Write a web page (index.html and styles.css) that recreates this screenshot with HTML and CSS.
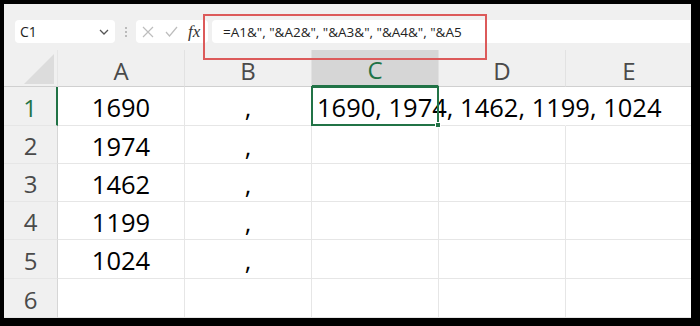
FILE: index.html
```html
<!DOCTYPE html>
<html>
<head>
<meta charset="utf-8">
<link rel="stylesheet" href="styles.css">
</head>
<body>
<div class="frame">
  <div class="app">
    <div class="fbar">
      <div class="namebox">
        <span>C1</span>
        <svg class="chev" width="10" height="6" viewBox="0 0 10 6"><polyline points="1,1 5,5 9,1" fill="none" stroke="#555" stroke-width="1.3"/></svg>
      </div>
      <div class="grip"><i></i><i></i><i></i></div>
      <div class="btns">
        <svg width="12" height="12" viewBox="0 0 12 12"><path d="M1 1 L11 11 M11 1 L1 11" stroke="#bdbdbd" stroke-width="1.2" fill="none"/></svg>
        <svg width="13" height="11" viewBox="0 0 13 11"><polyline points="1,6 4.5,10 12,1" fill="none" stroke="#bdbdbd" stroke-width="1.2"/></svg>
        <span class="fx">fx</span>
      </div>
      <div class="formula">=A1&amp;", "&amp;A2&amp;", "&amp;A3&amp;", "&amp;A4&amp;", "&amp;A5</div>
    </div>
    <div class="sheet">
      <div class="corner"><svg width="30" height="30" viewBox="0 0 30 30"><polygon points="30,0 30,30 0,30" fill="#dcdcdc"/></svg></div>
      <div class="ch">A</div>
      <div class="ch">B</div>
      <div class="ch ch-sel">C</div>
      <div class="ch">D</div>
      <div class="ch">E</div>

      <div class="rh rh-sel">1</div>
      <div class="c ctr">1690</div>
      <div class="c ctr">,</div>
      <div class="c sel"><span>1690, 1974, 1462, 1199, 1024</span></div>
      <div class="c no-rb"></div>
      <div class="c no-rb"></div>

      <div class="rh">2</div>
      <div class="c ctr">1974</div>
      <div class="c ctr">,</div>
      <div class="c"></div>
      <div class="c"></div>
      <div class="c"></div>

      <div class="rh">3</div>
      <div class="c ctr">1462</div>
      <div class="c ctr">,</div>
      <div class="c"></div>
      <div class="c"></div>
      <div class="c"></div>

      <div class="rh">4</div>
      <div class="c ctr">1199</div>
      <div class="c ctr">,</div>
      <div class="c"></div>
      <div class="c"></div>
      <div class="c"></div>

      <div class="rh">5</div>
      <div class="c ctr">1024</div>
      <div class="c ctr">,</div>
      <div class="c"></div>
      <div class="c"></div>
      <div class="c"></div>

      <div class="rh">6</div>
      <div class="c"></div>
      <div class="c"></div>
      <div class="c"></div>
      <div class="c"></div>
      <div class="c"></div>
    </div>
    <div class="highlight"></div>
  </div>
</div>
</body>
</html>
```
FILE: styles.css
```css
html, body {
  margin: 0;
  padding: 0;
  background: #000;
}
.frame {
  width: 700px;
  height: 326px;
  box-sizing: border-box;
  padding: 4px 9px 8px 4px;
  background: #000;
}
.app {
  position: relative;
  width: 687px;
  height: 314px;
  background: #fff;
  overflow: hidden;
  font-family: "Open Sans", "Liberation Sans", sans-serif;
}
.fbar {
  height: 46px;
  box-sizing: border-box;
  padding: 16px 1px 7px 11px;
  background: #f0f0f0;
  display: flex;
  align-items: stretch;
}
.namebox {
  width: 100px;
  height: 23px;
  box-sizing: border-box;
  background: #fff;
  border-radius: 4px;
  display: flex;
  align-items: center;
  justify-content: space-between;
  padding: 0 5px 0 5px;
  font-size: 14px;
  color: #222;
}
.chev { margin-right: 1px; }
.grip {
  width: 21px;
  display: flex;
  flex-direction: column;
  align-items: center;
  justify-content: center;
  gap: 2px;
}
.grip i {
  display: block;
  width: 2px;
  height: 2px;
  border-radius: 1px;
  background: #aaa;
}
.btns {
  width: 72px;
  height: 23px;
  box-sizing: border-box;
  background: #fff;
  border-radius: 4px;
  display: flex;
  align-items: center;
  padding-left: 6px;
  gap: 11px;
}
.fx {
  font-family: "Liberation Serif", serif;
  font-style: italic;
  font-size: 17px;
  color: #333;
  margin-left: -1px;
}
.formula {
  flex: 1;
  margin-left: 4px;
  height: 23px;
  box-sizing: border-box;
  background: #fff;
  border-radius: 4px 0 0 4px;
  display: flex;
  align-items: center;
  padding-left: 11px;
  font-size: 13.5px;
  color: #222;
  white-space: nowrap;
}
.sheet {
  display: grid;
  grid-template-columns: 54px repeat(5, 127px);
  grid-template-rows: 37px 39px 38px 38px 38px 39px 39px;
  background: #fff;
}
.sheet > div {
  box-sizing: border-box;
  border-right: 1px solid #e6e6e6;
  border-bottom: 1px solid #e6e6e6;
  display: flex;
  align-items: center;
}
.corner {
  background: #f0f0f0;
  justify-content: flex-end;
  align-items: flex-end !important;
  padding: 0 3px 2px 0;
  border-bottom-color: #d0d0d0 !important;
}
.ch {
  background: #f0f0f0;
  justify-content: center;
  font-size: 24px;
  color: #4a4a4a;
  padding-top: 4px;
  border-right-color: #e2e2e2 !important;
  border-bottom-color: #d0d0d0 !important;
}
.ch-sel {
  background: #d6d6d6;
  color: #217346;
  border-bottom: 2px solid #217346 !important;
}
.rh {
  background: #f0f0f0;
  justify-content: center;
  font-size: 24px;
  color: #4a4a4a;
  padding-top: 2px;
  border-right-color: #d6d6d6 !important;
}
.rh-sel {
  color: #217346;
  border-right: 2px solid #217346 !important;
}
.c {
  font-size: 25.5px;
  color: #000;
  padding-top: 2px;
}
.ctr { justify-content: center; }
.no-rb { border-right-color: transparent !important; }
.sel {
  position: relative;
  padding-left: 5px;
  white-space: nowrap;
  overflow: visible;
}
.sel span { flex: none; }
.sel::after {
  content: "";
  position: absolute;
  left: -1px;
  top: -1px;
  right: -1px;
  bottom: -1px;
  border: 2px solid #217346;
  z-index: 2;
}
.sel::before {
  content: "";
  position: absolute;
  right: -3px;
  bottom: -3px;
  width: 4px;
  height: 4px;
  background: #217346;
  border: 1px solid #fff;
  z-index: 3;
}
.highlight {
  position: absolute;
  left: 199px;
  top: 10px;
  width: 284px;
  height: 46px;
  box-sizing: border-box;
  border: 2px solid #dc5a5a;
  z-index: 5;
}
```
